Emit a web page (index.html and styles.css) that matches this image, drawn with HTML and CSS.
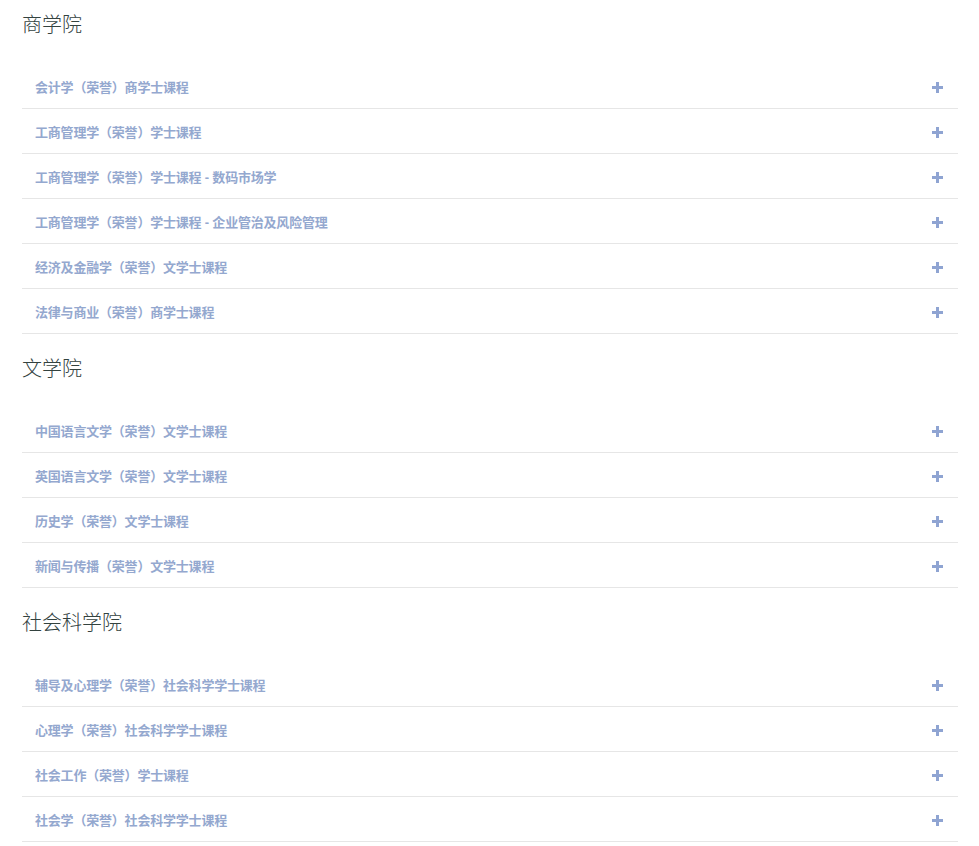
FILE: index.html
```html
<!DOCTYPE html>
<html lang="zh-CN">
<head>
    <meta charset="UTF-8">
    <meta name="viewport" content="width=device-width, initial-scale=1.0">
    <title>课程列表</title>
    <link rel="stylesheet" href="styles.css">
</head>
<body>
    <div class="page">
        <div class="section">
            <h2 class="section-title">商学院</h2>
            <ul class="course-list">
                <li class="course"><span>会计学（荣誉）商学士课程</span><i class="plus"></i></li>
                <li class="course"><span>工商管理学（荣誉）学士课程</span><i class="plus"></i></li>
                <li class="course"><span>工商管理学（荣誉）学士课程 - 数码市场学</span><i class="plus"></i></li>
                <li class="course"><span>工商管理学（荣誉）学士课程 - 企业管治及风险管理</span><i class="plus"></i></li>
                <li class="course"><span>经济及金融学（荣誉）文学士课程</span><i class="plus"></i></li>
                <li class="course"><span>法律与商业（荣誉）商学士课程</span><i class="plus"></i></li>
            </ul>
        </div>

        <div class="section">
            <h2 class="section-title">文学院</h2>
            <ul class="course-list">
                <li class="course"><span>中国语言文学（荣誉）文学士课程</span><i class="plus"></i></li>
                <li class="course"><span>英国语言文学（荣誉）文学士课程</span><i class="plus"></i></li>
                <li class="course"><span>历史学（荣誉）文学士课程</span><i class="plus"></i></li>
                <li class="course"><span>新闻与传播（荣誉）文学士课程</span><i class="plus"></i></li>
            </ul>
        </div>

        <div class="section">
            <h2 class="section-title">社会科学院</h2>
            <ul class="course-list">
                <li class="course"><span>辅导及心理学（荣誉）社会科学学士课程</span><i class="plus"></i></li>
                <li class="course"><span>心理学（荣誉）社会科学学士课程</span><i class="plus"></i></li>
                <li class="course"><span>社会工作（荣誉）学士课程</span><i class="plus"></i></li>
                <li class="course"><span>社会学（荣誉）社会科学学士课程</span><i class="plus"></i></li>
            </ul>
        </div>
    </div>
</body>
</html>
```

FILE: styles.css
```css
body {
    margin: 0;
    background: #fff;
    font-family: "Liberation Sans", "Noto Sans CJK SC", sans-serif;
}
.page {
    padding: 0 21px 0 22px;
}
.section + .section {
    margin-top: 10px;
}
.section-title {
    margin: 0;
    padding: 10px 0 24px;
    font-size: 20px;
    line-height: 30px;
    font-weight: 300;
    color: #33423f;
}
.course-list {
    list-style-type: none;
    margin: 0;
    padding: 0;
}
.course {
    display: flex;
    justify-content: space-between;
    align-items: center;
    box-sizing: border-box;
    height: 45px;
    padding: 0 15px 0 13px;
    border-bottom: 1px solid #e6e6e6;
    font-size: 13px;
    font-weight: bold;
    letter-spacing: -0.2px;
    color: #94a8cf;
}
.plus {
    position: relative;
    width: 11px;
    height: 11px;
    margin-top: 2px;
}
.plus::before,
.plus::after {
    content: "";
    position: absolute;
    background: #8fa4d2;
}
.plus::before {
    left: 0;
    top: 4px;
    width: 11px;
    height: 3px;
}
.plus::after {
    left: 4px;
    top: 0;
    width: 3px;
    height: 11px;
}
```
